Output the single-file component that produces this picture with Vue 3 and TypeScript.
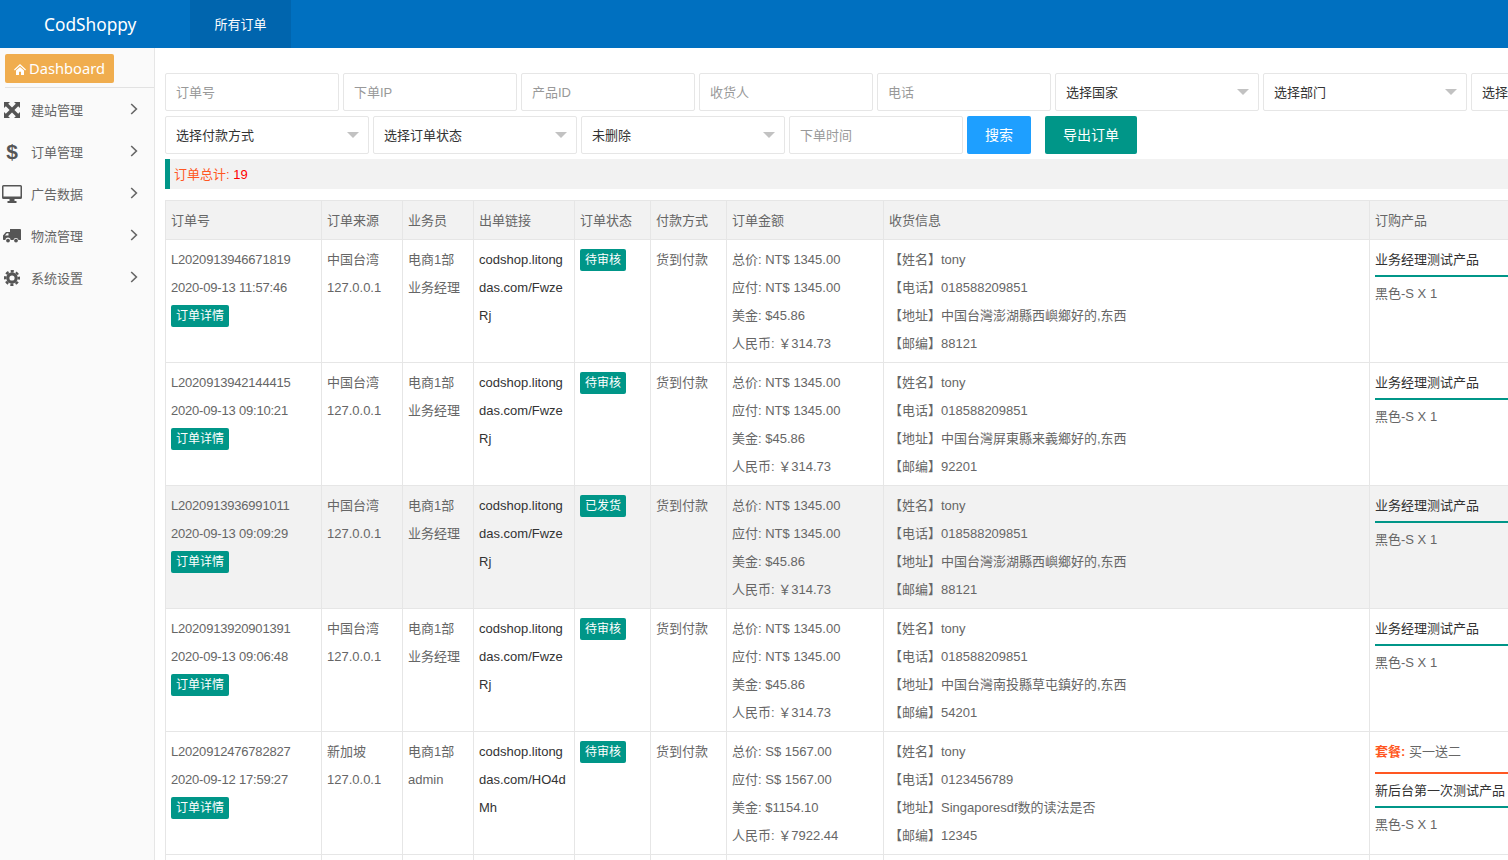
<script setup lang="ts">
interface Order {
  no: string; time: string; source: string; ip: string; dept: string; role: string;
  link: string[]; status: string; pay: string; total: string; usd: string; cny: string;
  phone: string; addr: string; zip: string; pkg?: string; product: string; hl?: boolean;
}
const menus = ['建站管理', '订单管理', '广告数据', '物流管理', '系统设置']
const inputs1 = ['订单号', '下单IP', '产品ID', '收货人', '电话']
const selects1 = ['选择国家', '选择部门', '选择业务员']
const selects2 = ['选择付款方式', '选择订单状态', '未删除']
const heads = ['订单号', '订单来源', '业务员', '出单链接', '订单状态', '付款方式', '订单金额', '收货信息', '订购产品']
const base = {
  source: '中国台湾', ip: '127.0.0.1', dept: '电商1部', role: '业务经理',
  link: ['codshop.litong', 'das.com/Fwze', 'Rj'], status: '待审核', pay: '货到付款',
  total: 'NT$ 1345.00', usd: '$45.86', cny: '￥314.73', phone: '018588209851', product: '业务经理测试产品',
}
const orders: Order[] = [
  { ...base, no: 'L2020913946671819', time: '2020-09-13 11:57:46', addr: '中国台灣澎湖縣西嶼鄉好的,东西', zip: '88121' },
  { ...base, no: 'L2020913942144415', time: '2020-09-13 09:10:21', addr: '中国台灣屏東縣来義鄉好的,东西', zip: '92201' },
  { ...base, no: 'L2020913936991011', time: '2020-09-13 09:09:29', status: '已发货', addr: '中国台灣澎湖縣西嶼鄉好的,东西', zip: '88121', hl: true },
  { ...base, no: 'L2020913920901391', time: '2020-09-13 09:06:48', addr: '中国台灣南投縣草屯鎮好的,东西', zip: '54201' },
  { ...base, no: 'L2020912476782827', time: '2020-09-12 17:59:27', source: '新加坡', role: 'admin', link: ['codshop.litong', 'das.com/HO4d', 'Mh'], total: 'S$ 1567.00', usd: '$1154.10', cny: '￥7922.44', phone: '0123456789', addr: 'Singaporesdf数的读法是否', zip: '12345', pkg: '买一送二', product: '新后台第一次测试产品' },
]
</script>

<template>
  <div class="page">
    <header class="top">
      <div class="logo">CodShoppy</div>
      <div class="tab">所有订单</div>
    </header>
    <div class="body">
      <aside class="side">
        <div class="dash-wrap">
          <div class="dash">
            <svg class="home" viewBox="0 0 12 11" width="12" height="11"><path d="M6 0 12 5.6 11.2 6.4 6 1.8.8 6.4 0 5.6ZM2 6.6 6 3 10 6.6V11H7V7.8H5V11H2Z" fill="#fff"/></svg>
            <span class="dash-text">Dashboard</span>
          </div>
        </div>
        <ul class="menu">
          <li v-for="(m, i) in menus" :key="m">
            <span class="ico">
              <svg v-if="i === 0" viewBox="0 0 16 16" width="16" height="16"><path d="M0 0H6L4.2 1.8 8 5.6 11.8 1.8 10 0H16V6L14.2 4.2 10.4 8 14.2 11.8 16 10V16H10L11.8 14.2 8 10.4 4.2 14.2 6 16H0V10L1.8 11.8 5.6 8 1.8 4.2 0 6Z" fill="#555"/></svg>
              <span v-else-if="i === 1" class="dollar">$</span>
              <svg v-else-if="i === 2" viewBox="0 0 20 18" width="20" height="18"><path d="M1.5 0H18.5A1.5 1.5 0 0 1 20 1.5V12.5A1.5 1.5 0 0 1 18.5 14H12.5V16H14.5V18H5.5V16H7.5V14H1.5A1.5 1.5 0 0 1 0 12.5V1.5A1.5 1.5 0 0 1 1.5 0ZM1.5 1.5V11.5H18.5V1.5Z" fill="#555"/></svg>
              <svg v-else-if="i === 3" viewBox="0 0 18 14" width="18" height="14"><path d="M7 0H17A1 1 0 0 1 18 1V11H15.5A2.6 2.6 0 0 0 10.4 11H7.6A2.6 2.6 0 0 0 2.4 11H.8A.8.8 0 0 1 0 10.2V6.5L3 3H7ZM2 6.5H5.5V4.3H3.8Z" fill="#555" fill-rule="evenodd"/><circle cx="5" cy="11.6" r="1.9" fill="#555"/><circle cx="13" cy="11.6" r="1.9" fill="#555"/></svg>
              <svg v-else viewBox="0 0 16 16" width="16" height="16"><circle cx="8" cy="8" r="4.2" fill="none" stroke="#555" stroke-width="3.2"/><circle cx="8" cy="8" r="6.8" fill="none" stroke="#555" stroke-width="2.4" stroke-dasharray="3.1 2.24" stroke-dashoffset="1.5"/></svg>
            </span>
            <span class="mtext">{{ m }}</span>
            <svg class="chev" viewBox="0 0 8 12" width="8" height="12"><path d="M1.2 1 6.4 6 1.2 11" fill="none" stroke="#666" stroke-width="1.6"/></svg>
          </li>
        </ul>
      </aside>
      <main class="main">
        <div class="row">
          <input v-for="p in inputs1" :key="p" class="ctl inp" :placeholder="p" />
          <div v-for="s in selects1" :key="s" class="ctl sel">{{ s }}</div>
        </div>
        <div class="row">
          <div v-for="s in selects2" :key="s" class="ctl sel">{{ s }}</div>
          <input class="ctl inp" placeholder="下单时间" />
          <button class="btn blue">搜索</button>
          <button class="btn green">导出订单</button>
        </div>
        <div class="quote">订单总计: <span class="num">19</span></div>
        <table class="tbl">
          <colgroup>
            <col class="c1" /><col class="c2" /><col class="c3" />
            <col class="c4" /><col class="c5" /><col class="c5" />
            <col class="c6" /><col class="c7" /><col class="c8" />
          </colgroup>
          <thead>
            <tr><th v-for="h in heads" :key="h">{{ h }}</th></tr>
          </thead>
          <tbody>
            <tr v-for="o in orders" :key="o.no" :class="{ hl: o.hl }">
              <td>
                <div class="no">{{ o.no }}</div>
                <div class="no">{{ o.time }}</div>
                <div class="line"><span class="tag">订单详情</span></div>
              </td>
              <td><div>{{ o.source }}</div><div>{{ o.ip }}</div></td>
              <td><div>{{ o.dept }}</div><div>{{ o.role }}</div></td>
              <td class="link"><div v-for="l in o.link" :key="l">{{ l }}</div></td>
              <td><div class="line"><span class="tag">{{ o.status }}</span></div></td>
              <td>{{ o.pay }}</td>
              <td>
                <div>总价: {{ o.total }}</div>
                <div>应付: {{ o.total }}</div>
                <div>美金: {{ o.usd }}</div>
                <div>人民币: {{ o.cny }}</div>
              </td>
              <td>
                <div>【姓名】tony</div>
                <div>【电话】{{ o.phone }}</div>
                <div>【地址】{{ o.addr }}</div>
                <div>【邮编】{{ o.zip }}</div>
              </td>
              <td>
                <div v-if="o.pkg" class="pkg"><b>套餐:</b> {{ o.pkg }}</div>
                <div class="prod">{{ o.product }}</div>
                <div class="sku">黑色-S X 1</div>
              </td>
            </tr>
            <tr class="empty"><td v-for="h in heads" :key="h"></td></tr>
          </tbody>
        </table>
      </main>
    </div>
  </div>
</template>

<style>
html, body { margin: 0; overflow: hidden; }
</style>

<style scoped>
.page {
  width: 1508px;
  height: 860px;
  overflow: hidden;
  display: flex;
  flex-direction: column;
  font-family: "Liberation Sans", "Noto Sans CJK SC", sans-serif;
  font-size: 13px;
  color: #666;
  background: #fff;
}
.top {
  height: 48px;
  flex: none;
  display: flex;
  background: #0070c0;
  color: #fff;
}
.logo {
  width: 190px;
  padding-left: 44px;
  box-sizing: border-box;
  font: 17.3px/50px "Noto Sans", sans-serif;
  height: 48px;
}
.tab {
  width: 101px;
  text-align: center;
  line-height: 50px;
  background: #0065ae;
}
.body { flex: 1; display: flex; min-height: 0; }
.side {
  width: 155px;
  flex: none;
  box-sizing: border-box;
  background: #fafafa;
  border-right: 1px solid #e6e6e6;
}
.dash-wrap {
  margin-left: 5px;
  padding: 6px 0 3px;
  border-bottom: 1px solid #e2e2e2;
  height: 30px;
}
.dash {
  width: 109px;
  height: 29px;
  box-sizing: border-box;
  display: flex;
  align-items: center;
  padding-left: 9px;
  gap: 3px;
  background: #f0ad4e;
  border-radius: 2px;
  color: #fff;
  font: 14.7px "Noto Sans", sans-serif;
}
.dash-text { margin-top: -2px; }
.home { flex: none; margin-top: 2px; }
.menu { list-style: none; margin: 0; padding: 0; }
.menu li { height: 42px; display: flex; align-items: center; }
.ico {
  width: 24px;
  margin: 1px 7px 0 0;
  display: flex;
  justify-content: center;
  align-items: center;
}
.dollar { font: bold 21px/1 "Liberation Sans", sans-serif; color: #555; }
.mtext { width: 99px; }
.main {
  flex: 1;
  min-width: 0;
  overflow: hidden;
  padding: 25px 0 0 10px;
}
.row { display: flex; gap: 4px; height: 38px; margin-bottom: 5px; }
.ctl {
  flex: none;
  box-sizing: border-box;
  height: 38px;
  border: 1px solid #e6e6e6;
  border-radius: 2px;
  background: #fff;
  padding: 0 10px;
  font: 13px/36px "Liberation Sans", "Noto Sans CJK SC", sans-serif;
  color: #333;
}
.inp { width: 174px; outline: none; }
.inp::placeholder { color: #999; opacity: 1; }
.sel { width: 204px; position: relative; line-height: 38px; }
.sel::after {
  content: "";
  position: absolute;
  right: 9px;
  top: 15px;
  border: 6px solid transparent;
  border-top-color: #c2c2c2;
  border-bottom: 0;
}
.btn {
  flex: none;
  height: 38px;
  border: 0;
  border-radius: 2px;
  color: #fff;
  font: 14px "Liberation Sans", "Noto Sans CJK SC", sans-serif;
  padding: 0 0 2px;
}
.blue { width: 64px; background: #1e9fff; }
.green { width: 92px; margin-left: 10px; background: #009688; }
.quote {
  height: 30px;
  box-sizing: border-box;
  border-left: 5px solid #009688;
  background: #f2f2f2;
  padding-left: 4px;
  line-height: 31px;
  color: #ff5722;
  margin-bottom: 11px;
}
.num { color: #f00; }
.tbl {
  width: 1364px;
  table-layout: fixed;
  border-collapse: collapse;
  line-height: 28px;
}
.c1 { width: 156px; }
.c2 { width: 81px; }
.c3 { width: 71px; }
.c4 { width: 101px; }
.c5 { width: 76px; }
.c6 { width: 157px; }
.c7 { width: 486px; }
.c8 { width: 160px; }
.tbl th, .tbl td {
  border: 1px solid #e6e6e6;
  padding: 6px 5px 4px;
  text-align: left;
  vertical-align: top;
  font-weight: 400;
  overflow: hidden;
  white-space: nowrap;
}
.tbl th { background: #f2f2f2; height: 39px; box-sizing: border-box; line-height: 28px; }
.tbl tbody td { height: 122px; box-sizing: border-box; }
.hl td { background: #f2f2f2; }
.no { letter-spacing: -0.2px; }
.link { color: #333; }
.line { height: 28px; display: flex; align-items: center; }
.tag {
  display: inline-block;
  height: 22px;
  line-height: 22px;
  padding: 0 5px;
  border-radius: 2px;
  background: #009688;
  color: #fff;
  font-size: 12px;
}
.pkg { padding-bottom: 6px; border-bottom: 2px solid #ff5722; margin-bottom: 3px; }
.pkg b { color: #ff5722; }
.prod { color: #333; padding-bottom: 1px; border-bottom: 2px solid #009688; }
.sku { margin-top: 3px; }
</style>
